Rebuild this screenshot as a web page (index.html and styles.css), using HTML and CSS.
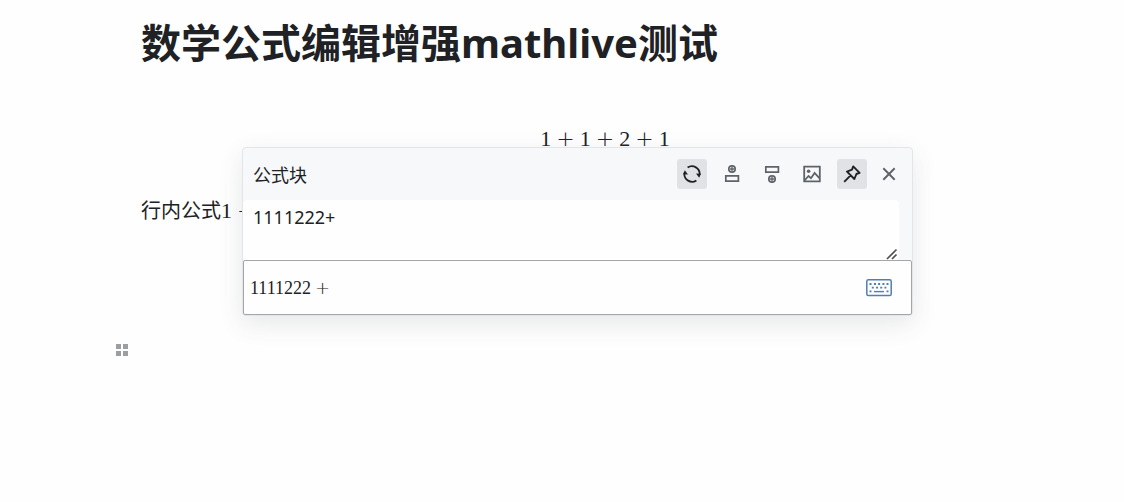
FILE: index.html
```html
<!DOCTYPE html>
<html lang="zh-CN">
<head>
<meta charset="utf-8">
<title>数学公式编辑增强mathlive测试</title>
<link rel="stylesheet" href="styles.css">
</head>
<body>
<main class="editor">
  <h1 class="title">数学公式编辑增强mathlive测试</h1>
  <div class="formula-block">
    <div class="math">1<span class="op">+</span>1<span class="op">+</span>2<span class="op">+</span>1</div>
    <section class="popup" aria-label="公式块">
      <header class="popup-head">
        <label class="popup-title" for="source">公式块</label>
        <div class="tools">
          <button class="tool active" type="button" aria-label="刷新">
            <svg viewBox="0 0 18 18"><g fill="none" stroke="currentColor" stroke-width="1.8"><path d="M4.6 2.6A7.7 7.7 0 0 1 16.6 9.8M13.4 15.4A7.7 7.7 0 0 1 1.4 8.2"/></g><path fill="currentColor" d="M0 9.2 1.8 5.2 5 9.4zM18 8.8 16.2 12.8 13 8.6z"/></svg>
          </button>
          <button class="tool" type="button" aria-label="在上方插入">
            <svg viewBox="0 0 18 18"><g fill="none" stroke="currentColor" stroke-width="1.7"><path d="M2.8 10.8h12.6v5.4H2.8z"/><circle cx="9" cy="4" r="3.2"/><path stroke-width="1.3" d="M9 2v4M7 4h4"/></g></svg>
          </button>
          <button class="tool" type="button" aria-label="在下方插入">
            <svg viewBox="0 0 18 18"><g fill="none" stroke="currentColor" stroke-width="1.7"><path d="M2.8 1.8h12.6v5.4H2.8z"/><circle cx="9" cy="14" r="3.2"/><path stroke-width="1.3" d="M9 12v4M7 14h4"/></g></svg>
          </button>
          <button class="tool" type="button" aria-label="导出图片">
            <svg viewBox="0 0 18 18"><path fill="none" stroke="currentColor" stroke-width="1.8" d="M1.2 1.6h15.6v14.8H1.2zM1.5 15.5 5.5 11l2.5 2.2 3.6-5.2 5 5.4"/><circle cx="5.6" cy="6.2" r="1.8" fill="currentColor"/></svg>
          </button>
          <button class="tool active" type="button" aria-label="固定">
            <svg viewBox="0 0 18 18"><path fill="none" stroke="currentColor" stroke-width="1.9" stroke-linejoin="round" d="M10.2 1.4 16.6 7.8 13.4 9 11.4 14 4 6.6 9 4.6zM7.6 10.4 1.2 16.8"/></svg>
          </button>
          <button class="tool close" type="button" aria-label="关闭">
            <svg viewBox="0 0 18 18"><path fill="none" stroke="currentColor" stroke-width="2.2" d="M2.6 2.6 15.4 15.4M15.4 2.6 2.6 15.4"/></svg>
          </button>
        </div>
      </header>
      <div class="source-row">
        <textarea class="source" id="source" spellcheck="false">1111222+</textarea>
        <svg class="grip" viewBox="0 0 12 12" aria-hidden="true"><path fill="none" stroke="#505050" stroke-width="1.7" d="M1 11 10.5 1.5M6 11l4.5-4.5"/></svg>
      </div>
      <div class="mathfield">
        <div class="math small">1111222<span class="op">+</span></div>
        <button class="keyboard" type="button" aria-label="虚拟键盘">
          <svg viewBox="0 0 26 18"><rect x="0.8" y="0.8" width="24.4" height="15.8" rx="1.6" fill="none" stroke="currentColor" stroke-width="1.5"/><path fill="none" stroke="currentColor" stroke-width="1.8" d="M3.5 5h2m2.5 0h2m2.1 0h2m2.3 0h2m2.1 0h2M5.8 8.7h2m2.2 0h2m2.2 0h2m2.2 0h2M3.5 12.4h2m15 0h2"/><path stroke="currentColor" stroke-width="1.4" d="M8 12.6h10"/></svg>
        </button>
      </div>
    </section>
  </div>
  <p class="paragraph">行内公式<span class="math">1<span class="op">+</span></span></p>
  <button class="handle" type="button" aria-label="块菜单">
    <svg viewBox="0 0 14 12"><path fill="currentColor" d="M1 0h5v5H1zM8 0h5v5H8zM1 7h5v5H1zM8 7h5v5H8z"/></svg>
  </button>
</main>
</body>
</html>
```
FILE: styles.css
```css
* { box-sizing: border-box; }

body {
  margin: 0;
  background: #fefefe;
  color: #202124;
  font-family: "Noto Sans", "Noto Sans CJK SC", sans-serif;
  font-size: 20px;
}

svg { display: block; }

button {
  border: 0;
  padding: 0;
  background: none;
  color: #5f6368;
}

.editor { padding: 15px 55px 0 141px; }

.title {
  margin: 0;
  font-size: 40px;
  line-height: 56px;
}

.formula-block {
  position: relative;
  margin-top: 52px;
}

.math {
  font-family: "Liberation Serif", serif;
  font-size: 22px;
  line-height: 32px;
  text-align: center;
}

.op {
  margin: 0 5px;
  font-family: "DejaVu Sans Light", "DejaVu Sans", sans-serif;
  font-weight: 200;
}

.popup {
  position: absolute;
  top: 24px;
  left: 101px;
  z-index: 1;
  width: 671px;
  border: 1px solid #e3e5e8;
  border-radius: 4px;
  background: #f6f8fa;
  box-shadow: 0 8px 24px rgba(66, 74, 83, 0.12);
}

.popup-head {
  display: flex;
  align-items: center;
  justify-content: space-between;
  height: 52px;
  padding: 0 8px 0 10px;
}

.popup-title { font-size: 18px; }

.tools {
  display: flex;
  gap: 10px;
}

.tool {
  display: grid;
  place-items: center;
  width: 30px;
  height: 30px;
  border-radius: 3px;
}

.tool svg {
  width: 18px;
  height: 18px;
}

.tool.active {
  background: #e0e2e5;
  color: #202124;
}

.tool.close { margin-left: -3px; }
.tool.close svg { width: 16px; height: 16px; }

.source-row {
  position: relative;
  margin-right: 13px;
}

.source {
  display: block;
  width: 100%;
  height: 60px;
  border: 0;
  border-radius: 4px;
  padding: 5px 10px;
  background: #fefefe;
  color: inherit;
  font-family: inherit;
  font-size: 18px;
  line-height: 24px;
  resize: none;
  outline: 0;
}

.grip {
  position: absolute;
  right: 1px;
  bottom: 0;
  width: 12px;
  height: 12px;
}

.mathfield {
  display: flex;
  align-items: center;
  justify-content: space-between;
  height: 55px;
  border: 1px solid #a6a6a8;
  border-radius: 2px;
  padding: 0 19px 0 6px;
  background: #fefefe;
}

.math.small { font-size: 18px; }

.small .op { margin: 0 4px; }

.keyboard { color: #4c7fb3; }

.keyboard svg {
  width: 26px;
  height: 18px;
}

.paragraph {
  margin: 39px 0 0;
  line-height: 34px;
}

.handle {
  display: block;
  margin: 116px 0 0 -26px;
  color: #9c9fa1;
}

.handle svg {
  width: 14px;
  height: 12px;
}
```
